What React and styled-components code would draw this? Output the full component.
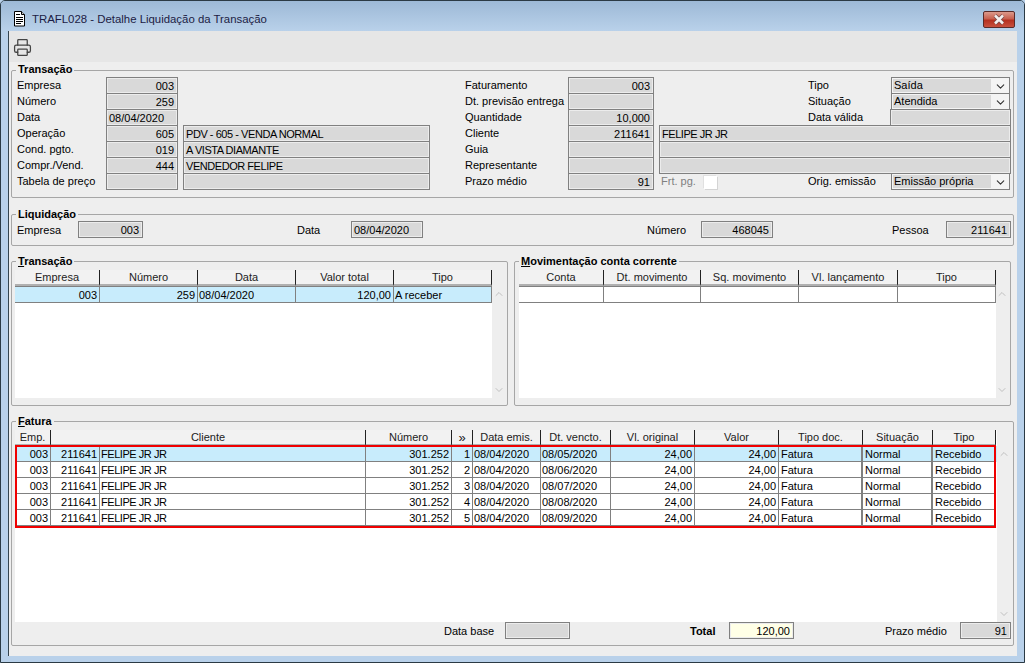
import React from 'react';
import styled, { createGlobalStyle } from 'styled-components';
import { Printer, ChevronUp, ChevronDown } from 'lucide-react';

const Global = createGlobalStyle`
    html, body {
        margin: 0;
        padding: 0;
        background: #b9d1ea;
    }
    body {
        font-family: "Liberation Sans", Arial, sans-serif;
        font-size: 11px;
        color: #000;
    }
`;

const Win = styled.div`
    width: 1025px;
    height: 663px;
    box-sizing: border-box;
    border: 1px solid #2b3a44;
    border-radius: 5px 5px 0 0;
    background: #b9d1ea;
    display: flex;
    flex-direction: column;
    overflow: hidden;
`;

const TitleBar = styled.div`
    height: 30px;
    box-sizing: border-box;
    flex: none;
    display: flex;
    align-items: center;
    padding: 6px 9px 0 12px;
    background: linear-gradient(to bottom, #9db9d6, #b9d1ea);
    font-size: 11.4px;
    color: #1c1c44;
`;

const TitleText = styled.span`
    margin-left: 6px;
    flex: 1;
`;

const CloseBtn = styled.div`
    width: 32px;
    height: 17px;
    box-sizing: border-box;
    border: 1px solid #5a2a28;
    border-radius: 2px;
    background: linear-gradient(to bottom, #dc9a8c 0%, #c8604f 45%, #b5301f 55%, #c8503e 100%);
    display: flex;
    align-items: center;
    justify-content: center;
`;

const Client = styled.div`
    flex: 1;
    margin: 0 7px 6px 7px;
    border-left: 1px solid #35454f;
    background: #eeeeee;
    display: flex;
    flex-direction: column;
    min-height: 0;
`;

const Toolbar = styled.div`
    height: 31px;
    box-sizing: border-box;
    flex: none;
    background: #e6e6e6;
    display: flex;
    align-items: center;
    padding: 2px 0 0 4px;
    color: #444;
`;

const Content = styled.div`
    flex: 1;
    padding: 8px 3px 0 2px;
    display: flex;
    flex-direction: column;
    gap: 15px;
`;

const Group = styled.div`
    position: relative;
    box-sizing: border-box;
    height: ${p => p.$h}px;
    width: ${p => (p.$w ? `${p.$w}px` : 'auto')};
    margin-top: ${p => p.$mt || 0}px;
    flex: none;
    border: 1px solid #a6a6a6;
    border-radius: 2px;
    padding: ${p => p.$pad || '6px 2px 0 3px'};
`;

const Legend = styled.div`
    position: absolute;
    top: ${p => p.$top || -8}px;
    left: 4px;
    padding: 0 2px;
    background: #eeeeee;
    font-weight: bold;
    font-size: 11px;
    line-height: 14px;
    u { text-decoration: underline; }
`;

const FormGrid = styled.div`
    display: grid;
    grid-template-columns: 89px 72px 5px 247px 35px 103px 86px 5px 149px 83px 120px;
    grid-auto-rows: 16px;
    padding-left: 2px;
`;

const Label = styled.div`
    grid-column: ${p => p.$col};
    grid-row: ${p => p.$row};
    line-height: 16px;
    white-space: nowrap;
`;

const Field = styled.div`
    grid-column: ${p => p.$col};
    grid-row: ${p => p.$row};
    box-sizing: border-box;
    height: 17px;
    width: ${p => (p.$w ? `${p.$w}px` : 'auto')};
    margin-left: ${p => p.$ml || 0}px;
    padding: 0 3px 0 2px;
    border: 1px solid #808080;
    box-shadow: inset 0 0 0 1px #ececec;
    background: ${p => p.$bg || '#d9d9d9'};
    text-align: ${p => (p.$right ? 'right' : 'left')};
    letter-spacing: ${p => (p.$caps ? '-0.45px' : 'normal')};
    line-height: 16px;
    white-space: nowrap;
    overflow: hidden;
    flex: none;
`;

const Combo = styled.div`
    grid-column: ${p => p.$col};
    grid-row: ${p => p.$row};
    box-sizing: border-box;
    height: 17px;
    margin-right: 1px;
    border: 1px solid #808080;
    background: #f4f4f4;
    display: flex;
    color: #333;
`;

const ComboText = styled.div`
    flex: 1;
    background: #d9d9d9;
    margin: 1px 0 1px 1px;
    padding-left: 1px;
    line-height: 13px;
    color: #000;
`;

const ComboBtn = styled.div`
    width: 18px;
    display: flex;
    align-items: flex-end;
    justify-content: center;
`;

const Check = styled.div`
    grid-column: 9;
    grid-row: 7;
    display: flex;
    gap: 8px;
    padding-left: 2px;
    line-height: 16px;
    color: #808080;
`;

const CheckBox = styled.div`
    width: 13px;
    height: 13px;
    margin-top: 3px;
    background: #fff;
    box-shadow: 1px 1px 0 #d4d4d4, -1px -1px 0 #e0e0e0;
`;

const InlineRow = styled.div`
    display: flex;
    align-items: center;
    height: 17px;
    padding-left: 2px;
`;

const InlineLabel = styled.div`
    width: ${p => p.$w}px;
    margin-left: ${p => p.$ml || 0}px;
    flex: none;
    white-space: nowrap;
    font-weight: ${p => (p.$bold ? 'bold' : 'normal')};
`;

const TwoCols = styled.div`
    display: flex;
    gap: 6px;
`;

const GridBox = styled.div`
    position: relative;
    display: flex;
    height: ${p => p.$h}px;
`;

const GridWhite = styled.div`
    flex: none;
    width: ${p => p.$w}px;
    background: #fff;
    display: flex;
    flex-direction: column;
`;

const Scroll = styled.div`
    flex: 1;
    display: flex;
    flex-direction: column;
    justify-content: space-between;
    align-items: center;
    color: #c0c0c0;
    padding: 18px 0 2px;
`;

const Row = styled.div`
    display: flex;
    flex: none;
    height: 16px;
    background: ${p => (p.$on ? '#c8ecfc' : 'transparent')};
`;

const Head = styled.div`
    box-sizing: border-box;
    width: ${p => p.$w}px;
    flex: none;
    height: 16px;
    text-align: center;
    font-size: ${p => (p.$big ? 13 : 11)}px;
    line-height: 15px;
    background: #f2f2f2;
    color: #222;
    border-right: 1px solid #222;
    border-bottom: 2px solid #b0b0b0;
    white-space: nowrap;
    overflow: hidden;
`;

const Cell = styled.div`
    box-sizing: border-box;
    width: ${p => p.$w}px;
    flex: none;
    height: 16px;
    padding: 0 2px 0 ${p => p.$pl || 1}px;
    text-align: ${p => (p.$right ? 'right' : 'left')};
    letter-spacing: ${p => (p.$caps ? '-0.45px' : 'normal')};
    line-height: 16px;
    border-right: ${p => (p.$thick ? 2 : 1)}px solid #808080;
    border-bottom: 1px solid #808080;
    white-space: nowrap;
    overflow: hidden;
`;

const RedBox = styled.div`
    position: absolute;
    left: 0;
    top: 15px;
    width: 981px;
    height: 83px;
    box-sizing: border-box;
    border: 2px solid #f00000;
    pointer-events: none;
`;

const TopLine = styled.div`
    height: 0;
    border-top: 1px solid #808080;
`;

const tranCols = [85, 98, 98, 98, 98];
const movCols = [85, 97, 98, 99, 98];
const fatHead = [
    ['Emp.', 36],
    ['Cliente', 315],
    ['Número', 86],
    ['»', 21],
    ['Data emis.', 68],
    ['Dt. vencto.', 70],
    ['Vl. original', 84],
    ['Valor', 84],
    ['Tipo doc.', 84],
    ['Situação', 70],
    ['Tipo', 63],
];
const fatCols = [36, 49, 266, 86, 21, 68, 70, 84, 84, 84, 70, 63];
const fatRight = [1, 1, 0, 1, 1, 0, 0, 1, 1, 0, 0, 0];

const faturas = [1, 2, 3, 4, 5].map(n => [
    '003', '211641', 'FELIPE JR JR', '301.252', String(n), '08/04/2020',
    `08/0${n + 4}/2020`, '24,00', '24,00', 'Fatura', 'Normal', 'Recebido',
]);

const FileIcon = () => (
    <svg width="13" height="16" viewBox="0 0 13 16">
        <path d="M1.5.5h7l3 3v11.500h-10z" fill="#fff" stroke="#000" />
        <path d="M3 3.500h4M3 6.500h7M3 8.500h7M3 10.500h7M3 12.500h5" stroke="#000" />
        <path d="M8.500.5v3h3" fill="#ccc" stroke="#000" />
    </svg>
);

const CloseIcon = () => (
    <svg width="14" height="11" viewBox="0 0 14 11">
        <path d="M3 1.500l8 8M11 1.500l-8 8" stroke="#7a4a48" strokeWidth="4" />
        <path d="M3 1.500l8 8M11 1.500l-8 8" stroke="#f4f0f0" strokeWidth="2.500" />
    </svg>
);

const SelectBox = ({ col, row, children }) => (
    <Combo $col={col} $row={row}>
        <ComboText>{children}</ComboText>
        <ComboBtn>
            <ChevronDown size={13} strokeWidth={2} />
        </ComboBtn>
    </Combo>
);

const ScrollArrows = () => (
    <Scroll>
        <ChevronUp size={12} strokeWidth={2} />
        <ChevronDown size={12} strokeWidth={2} />
    </Scroll>
);

export default function App() {
    return (
        <Win>
            <Global />
            <TitleBar>
                <FileIcon />
                <TitleText>TRAFL028 - Detalhe Liquidação da Transação</TitleText>
                <CloseBtn>
                    <CloseIcon />
                </CloseBtn>
            </TitleBar>
            <Client>
                <Toolbar>
                    <Printer size={19} strokeWidth={1.6} />
                </Toolbar>
                <Content>
                    <Group $h={128}>
                        <Legend $top={-9}>Transação</Legend>
                        <FormGrid>
                            <Label $col={1} $row={1}>Empresa</Label>
                            <Field $col={2} $row={1} $right>003</Field>
                            <Label $col={1} $row={2}>Número</Label>
                            <Field $col={2} $row={2} $right>259</Field>
                            <Label $col={1} $row={3}>Data</Label>
                            <Field $col={2} $row={3}>08/04/2020</Field>
                            <Label $col={1} $row={4}>Operação</Label>
                            <Field $col={2} $row={4} $right>605</Field>
                            <Field $col={4} $row={4} $caps>PDV - 605 - VENDA NORMAL</Field>
                            <Label $col={1} $row={5}>Cond. pgto.</Label>
                            <Field $col={2} $row={5} $right>019</Field>
                            <Field $col={4} $row={5} $caps>A VISTA DIAMANTE</Field>
                            <Label $col={1} $row={6}>Compr./Vend.</Label>
                            <Field $col={2} $row={6} $right>444</Field>
                            <Field $col={4} $row={6} $caps>VENDEDOR FELIPE</Field>
                            <Label $col={1} $row={7}>Tabela de preço</Label>
                            <Field $col={2} $row={7} />
                            <Field $col={4} $row={7} />

                            <Label $col={6} $row={1}>Faturamento</Label>
                            <Field $col={7} $row={1} $right>003</Field>
                            <Label $col={6} $row={2}>Dt. previsão entrega</Label>
                            <Field $col={7} $row={2} />
                            <Label $col={6} $row={3}>Quantidade</Label>
                            <Field $col={7} $row={3} $right>10,000</Field>
                            <Label $col={6} $row={4}>Cliente</Label>
                            <Field $col={7} $row={4} $right>211641</Field>
                            <Field $col="9 / 12" $row={4} $caps>FELIPE JR JR</Field>
                            <Label $col={6} $row={5}>Guia</Label>
                            <Field $col={7} $row={5} />
                            <Field $col="9 / 12" $row={5} />
                            <Label $col={6} $row={6}>Representante</Label>
                            <Field $col={7} $row={6} />
                            <Field $col="9 / 12" $row={6} />
                            <Label $col={6} $row={7}>Prazo médio</Label>
                            <Field $col={7} $row={7} $right>91</Field>
                            <Check>
                                Frt. pg.
                                <CheckBox />
                            </Check>

                            <Label $col={10} $row={1}>Tipo</Label>
                            <SelectBox col={11} row={1}>Saída</SelectBox>
                            <Label $col={10} $row={2}>Situação</Label>
                            <SelectBox col={11} row={2}>Atendida</SelectBox>
                            <Label $col={10} $row={3}>Data válida</Label>
                            <Field $col={11} $row={3} $ml={-1} />
                            <Label $col={10} $row={7}>Orig. emissão</Label>
                            <SelectBox col={11} row={7}>Emissão própria</SelectBox>
                        </FormGrid>
                    </Group>

                    <Group $h={32} $mt={1}>
                        <Legend>Liquidação</Legend>
                        <InlineRow>
                            <InlineLabel $w={61}>Empresa</InlineLabel>
                            <Field $w={65} $right>003</Field>
                            <InlineLabel $ml={154} $w={54}>Data</InlineLabel>
                            <Field $w={72}>08/04/2020</Field>
                            <InlineLabel $ml={224} $w={54}>Número</InlineLabel>
                            <Field $w={72} $right>468045</Field>
                            <InlineLabel $ml={119} $w={54}>Pessoa</InlineLabel>
                            <Field $w={65} $right>211641</Field>
                        </InlineRow>
                    </Group>

                    <TwoCols>
                        <Group $h={145} $w={497} $pad="8px 2px 0 3px">
                            <Legend><u>T</u>ransação</Legend>
                            <GridBox $h={128}>
                                <GridWhite $w={477}>
                                    <Row>
                                        {['Empresa', 'Número', 'Data', 'Valor total', 'Tipo'].map((h, i) => (
                                            <Head key={h} $w={tranCols[i]}>{h}</Head>
                                        ))}
                                    </Row>
                                    <TopLine />
                                    <Row $on>
                                        {['003', '259', '08/04/2020', '120,00', 'A receber'].map((v, i) => (
                                            <Cell key={i} $w={tranCols[i]} $right={i === 0 || i === 1 || i === 3}>{v}</Cell>
                                        ))}
                                    </Row>
                                </GridWhite>
                                <ScrollArrows />
                            </GridBox>
                        </Group>
                        <Group $h={145} $w={497} $pad="8px 2px 0 4px">
                            <Legend><u>M</u>ovimentação conta corrente</Legend>
                            <GridBox $h={128}>
                                <GridWhite $w={477}>
                                    <Row>
                                        {['Conta', 'Dt. movimento', 'Sq. movimento', 'Vl. lançamento', 'Tipo'].map((h, i) => (
                                            <Head key={h} $w={movCols[i]}>{h}</Head>
                                        ))}
                                    </Row>
                                    <TopLine />
                                    <Row>
                                        {movCols.map((w, i) => (
                                            <Cell key={i} $w={w} />
                                        ))}
                                    </Row>
                                </GridWhite>
                                <ScrollArrows />
                            </GridBox>
                        </Group>
                    </TwoCols>

                    <Group $h={225} $pad="8px 2px 0 3px">
                        <Legend><u>F</u>atura</Legend>
                        <GridBox $h={192}>
                            <GridWhite $w={982}>
                                <Row>
                                    {fatHead.map(([h, w]) => (
                                        <Head key={h} $w={w} $big={h === '»'}>{h}</Head>
                                    ))}
                                </Row>
                                {faturas.map((row, r) => (
                                    <Row key={r} $on={r === 0}>
                                        {row.map((v, i) => (
                                            <Cell
                                                key={i}
                                                $w={fatCols[i]}
                                                $right={fatRight[i] === 1}
                                                $caps={i === 2}
                                                $thick={i === 9 || i === 10}
                                                $pl={i >= 9 ? 2 : 1}
                                            >
                                                {v}
                                            </Cell>
                                        ))}
                                    </Row>
                                ))}
                            </GridWhite>
                            <ScrollArrows />
                            <RedBox />
                        </GridBox>
                        <InlineRow>
                            <InlineLabel $ml={427} $w={61}>Data base</InlineLabel>
                            <Field $w={65} />
                            <InlineLabel $ml={120} $w={39} $bold>Total</InlineLabel>
                            <Field $w={65} $right $bg="#ffffe6">120,00</Field>
                            <InlineLabel $ml={91} $w={75}>Prazo médio</InlineLabel>
                            <Field $w={51} $right>91</Field>
                        </InlineRow>
                    </Group>
                </Content>
            </Client>
        </Win>
    );
}
